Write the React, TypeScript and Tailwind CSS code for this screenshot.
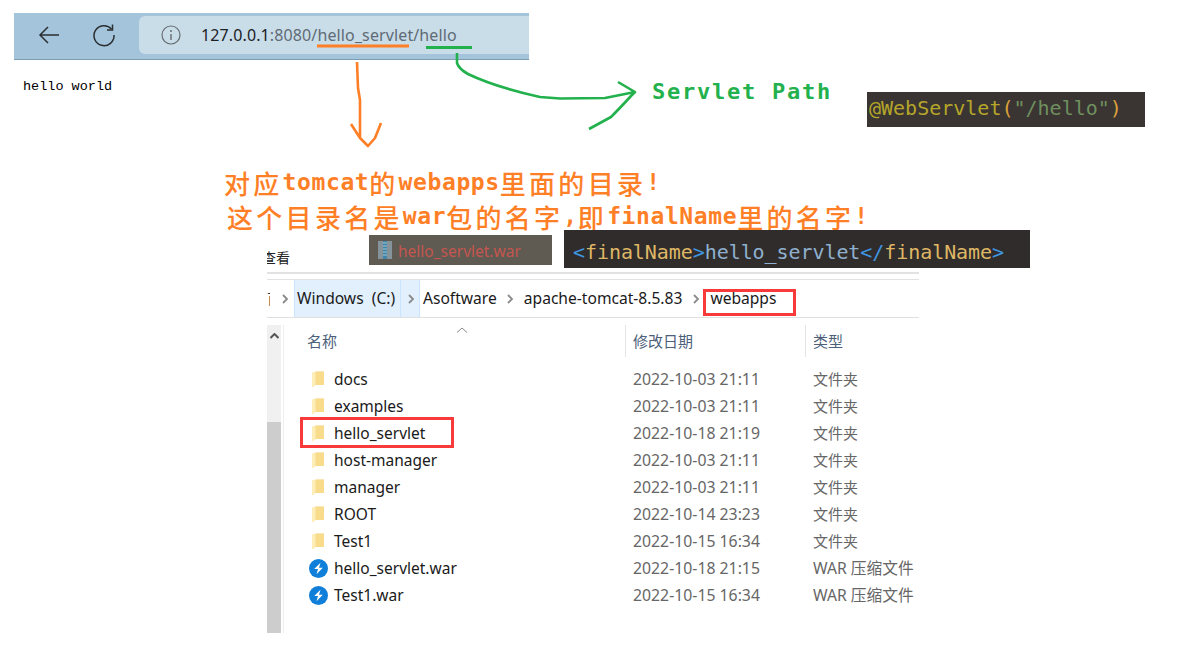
import React from "react";

const ui = "font-['Noto_Sans','Noto_Sans_CJK_SC',sans-serif]";

function Cn({ c }: { c: string }) {
  return <span className="font-['Noto_Sans_CJK_SC',sans-serif] text-[26px] font-medium tracking-[3.3px]">{c}</span>;
}

function Annotation({ parts }: { parts: string[] }) {
  return (
    <div className="flex items-center h-[35px] whitespace-pre font-['DejaVu_Sans_Mono',monospace] text-[23px] tracking-[0.6px] font-bold text-[#ff7f27]">
      {parts.map((p, i) => (i % 2 === 0 ? <Cn key={i} c={p} /> : <span key={i}>{p}</span>))}
    </div>
  );
}

function Folder() {
  return (
    <svg width="12" height="17" viewBox="0 0 12 17" className="shrink-0">
      <path d="M0 2 L4 0.5 H12 V14 H4 Z" fill="#f5cf6c" />
      <path d="M3 1 H12 V14 H3 Z" fill="#f9dc8b" />
      <path d="M0 2 L3.5 0.8 V14.5 L0 16.5 Z" fill="#fdeeb9" />
    </svg>
  );
}

function War() {
  return (
    <svg width="19" height="19" viewBox="0 0 19 19" className="shrink-0">
      <circle cx="9.5" cy="9.5" r="9.5" fill="#0f7fd9" />
      <path d="M11.5 3.8 L5.2 10 H9 L7.5 15.2 L13.8 8.8 H10 Z" fill="#fff" />
    </svg>
  );
}

const rows: [string, string, string, boolean][] = [
  ["docs", "2022-10-03 21:11", "文件夹", false],
  ["examples", "2022-10-03 21:11", "文件夹", false],
  ["hello_servlet", "2022-10-18 21:19", "文件夹", false],
  ["host-manager", "2022-10-03 21:11", "文件夹", false],
  ["manager", "2022-10-03 21:11", "文件夹", false],
  ["ROOT", "2022-10-14 23:23", "文件夹", false],
  ["Test1", "2022-10-15 16:34", "文件夹", false],
  ["hello_servlet.war", "2022-10-18 21:15", "WAR 压缩文件", true],
  ["Test1.war", "2022-10-15 16:34", "WAR 压缩文件", true],
];

function Chevron() {
  return (
    <svg width="8" height="12" viewBox="0 0 8 12" className="shrink-0">
      <path d="M2 2 L6 6 L2 10" fill="none" stroke="#8a8a8a" strokeWidth="1.8" />
    </svg>
  );
}

export default function App() {
  return (
    <div className={`relative w-[1177px] h-[647px] overflow-hidden bg-white ${ui}`}>
      {/* browser bar */}
      <div className="absolute left-[14px] top-[13px] w-[515px] h-[47px] bg-[#a3c4da] border-b border-[#7d9db3] flex items-start">
        <div className="flex items-center h-[43px] pl-[24px] gap-[32px] w-[125px]">
          <svg width="22" height="20" viewBox="0 0 22 20" className="shrink-0">
            <path d="M21 10 H2 M10 2 L2 10 L10 18" fill="none" stroke="#2b2f33" strokeWidth="1.5" />
          </svg>
          <svg width="24" height="24" viewBox="0 0 24 24" className="shrink-0">
            <path d="M19.5 6 A10 10 0 1 0 22 12" fill="none" stroke="#2b2f33" strokeWidth="1.5" />
            <path d="M20.5 1.5 V7 H15" fill="none" stroke="#2b2f33" strokeWidth="1.5" />
          </svg>
        </div>
        <div className="mt-[3px] h-[38px] flex-1 bg-[#c9dde9] rounded-l-[6px] flex items-center pl-[22px]">
          <svg width="20" height="20" viewBox="0 0 20 20" className="shrink-0">
            <circle cx="10" cy="10" r="9" fill="none" stroke="#666c70" strokeWidth="1.2" />
            <path d="M10 9 V15" stroke="#666c70" strokeWidth="1.4" />
            <circle cx="10" cy="6" r="1" fill="#666c70" />
          </svg>
          <div className="ml-[20px] text-[16px] tracking-[0.12px] text-[#5f6b75] whitespace-pre">
            <span className="text-[#1b2126]">127.0.0.1</span>:8080/hello_servlet/hello
          </div>
        </div>
      </div>

      <div className="absolute left-[23px] top-[79px] font-['Liberation_Mono',monospace] text-[13.5px] leading-[16px] text-black whitespace-pre">
        hello world
      </div>

      {/* hand-drawn marks */}
      <svg className="absolute left-0 top-0 pointer-events-none" width="1177" height="647" viewBox="0 0 1177 647">
        <path d="M317 46 H409" stroke="#ff7f27" strokeWidth="3" fill="none" />
        <path d="M426 47.5 H472" stroke="#22b14c" strokeWidth="3" fill="none" />
        <path d="M357 62 L358 88 L360 100 L360 138 L368 146 L375 138 L381 123 M351 124 L360 138" stroke="#ff7f27" strokeWidth="2.6" fill="none" strokeLinejoin="round" />
        <path d="M457 53 V63 Q459 69 468 74 Q495 87 540 97 L560 98.5 L605 98 L635 92 M618 82 L635 92 L631 96 Q620 108 611 117 L589 129" stroke="#22b14c" strokeWidth="2.6" fill="none" strokeLinejoin="round" />
      </svg>

      <div className="absolute left-[652px] top-[76px] font-['DejaVu_Sans_Mono',monospace] font-bold text-[22px] leading-[32px] tracking-[1.75px] text-[#22b14c] whitespace-pre">
        Servlet Path
      </div>

      <div className="absolute left-[867px] top-[92px] w-[278px] h-[35px] bg-[#3a3532] pl-[2px] pb-[3px] flex items-center font-['DejaVu_Sans_Mono',monospace] text-[20px] whitespace-pre text-[#b5a62a]">
        @WebServlet<span className="text-[#dca23a]">(</span>
        <span className="text-[#6f8f5f]">"/hello"</span>
        <span className="text-[#dca23a]">)</span>
      </div>

      {/* annotations */}
      <div className="absolute left-[224px] top-[165px]">
        <Annotation parts={["对应", "tomcat", "的", "webapps", "里面的目录", "!"]} />
      </div>
      <div className="absolute left-[227px] top-[199px]">
        <Annotation parts={["这个目录名是", "war", "包的名字", ",", "即", "finalName", "里的名字", "!"]} />
      </div>

      {/* pasted snippets */}
      <div className="absolute left-[369px] top-[235px] w-[183px] h-[30px] bg-[#5f5a52] flex items-center pl-[9px] gap-[6px]">
        <svg width="14" height="20" viewBox="0 0 14 20" className="shrink-0">
          <rect x="0" y="1" width="14" height="18" fill="#87939b" />
          <rect x="5" y="1" width="4" height="18" fill="#3e86a8" />
          <path d="M5 3 H9 M5 6 H9 M5 9 H9 M5 12 H9 M5 15 H9" stroke="#a9c3cf" strokeWidth="1" />
        </svg>
        <span className="pt-[4px] text-[15.5px] text-[#c4564f] whitespace-pre">hello_servlet.war</span>
      </div>

      <div className="absolute left-[564px] top-[230px] w-[466px] h-[38px] bg-[#2f2c2b] pl-[9px] pt-[5px] flex items-center font-['DejaVu_Sans_Mono',monospace] text-[20px] tracking-[-0.07px] whitespace-pre text-[#dfb765]">
        <span className="text-[#3f95e0]">&lt;</span>finalName<span className="text-[#3f95e0]">&gt;</span>
        <span className="text-[#8fb0cf]">hello_servlet</span>
        <span className="text-[#3f95e0]">&lt;/</span>finalName<span className="text-[#3f95e0]">&gt;</span>
      </div>

      <div className="absolute left-[267px] top-[248px] w-[23px] h-[18px] overflow-hidden flex justify-end font-['Noto_Sans_CJK_SC',sans-serif] text-[14px] leading-[18px] text-[#222] whitespace-pre">
        查看
      </div>

      {/* explorer */}
      <div className="absolute left-[267px] top-[272px] w-[652px] flex flex-col">
        <div className="h-[2px] bg-[#e2e2e2]" />
        <div className="h-[5px]" />
        <div className="h-[1px] bg-[#e2e2e2]" />
        <div className="relative h-[37px] flex items-center text-[15.6px] text-[#1a1a1a] whitespace-pre">
          <span className="w-[3px] overflow-hidden text-[14px] text-[#333]">百</span>
          <span className="ml-[11px] mr-[5px]"><Chevron /></span>
          <div className="h-[37px] w-[126px] bg-[#e2f0fd] border-x border-[#cbe6fc] flex items-center">
            <span className="w-[106px] shrink-0 pl-[2px] border-r border-[#cbe6fc] h-full flex items-center">Windows  (C:)</span>
            <span className="ml-[6px]"><Chevron /></span>
          </div>
          <span className="ml-[3px]">Asoftware</span>
          <span className="ml-[9px]"><Chevron /></span>
          <span className="ml-[10px]">apache-tomcat-8.5.83</span>
          <span className="ml-[10px]"><Chevron /></span>
          <span className="ml-[10px]">webapps</span>
          <div className="absolute left-[436px] top-[9px] w-[93px] h-[27px] border-[3px] border-[#f83a3a]" />
        </div>
        <div className="h-[1px] bg-[#e0e0e0]" />
        <div className="h-[7px]" />
        <div className="flex h-[308px]">
          <div className="w-[14px] bg-[#f0f0f0] flex flex-col">
            <div className="h-[97px] pt-[8px] pl-[3px]">
              <svg width="9" height="6" viewBox="0 0 9 6"><path d="M0.5 5 L4.5 1 L8.5 5" fill="none" stroke="#555" strokeWidth="2" /></svg>
            </div>
            <div className="flex-1 bg-[#cdcdcd]" />
          </div>
          <div className="ml-[2px] w-[1px] bg-[#eeeeee]" />
          <div className="relative flex-1 flex flex-col">
            <div className="flex h-[32px] text-[15px] text-[#4c607a] items-center font-['Noto_Sans_CJK_SC',sans-serif]">
              <div className="w-[341px] pl-[23px]">名称</div>
              <div className="w-[180px] h-full flex items-center border-l border-[#e4e4e4] pl-[7px]">修改日期</div>
              <div className="h-full flex items-center border-l border-[#e4e4e4] pl-[7px]">类型</div>
            </div>
            <svg className="absolute left-[172px] top-[2px]" width="12" height="6" viewBox="0 0 12 6">
              <path d="M1 5.5 L6 1 L11 5.5" fill="none" stroke="#888" strokeWidth="1" />
            </svg>
            <div className="pt-[9px] flex flex-col">
              {rows.map(([name, date, type, war]) => (
                <div key={name} className="flex h-[27px] items-center whitespace-pre">
                  <div className={`w-[50px] shrink-0 flex ${war ? "pl-[25px]" : "pl-[28px]"}`}>
                    {war ? <War /> : <Folder />}
                  </div>
                  <div className="w-[299px] shrink-0 text-[15.5px] text-[#1a1a1a]">{name}</div>
                  <div className="w-[180px] shrink-0 text-[15.8px] text-[#666]">{date}</div>
                  <div className={`text-[#666] ${war ? "text-[15.7px]" : "text-[15px]"}`}>{type}</div>
                </div>
              ))}
            </div>
            <div className="absolute left-[16px] top-[92px] w-[154px] h-[31px] border-[3px] border-[#f83a3a]" />
          </div>
        </div>
      </div>
    </div>
  );
}
